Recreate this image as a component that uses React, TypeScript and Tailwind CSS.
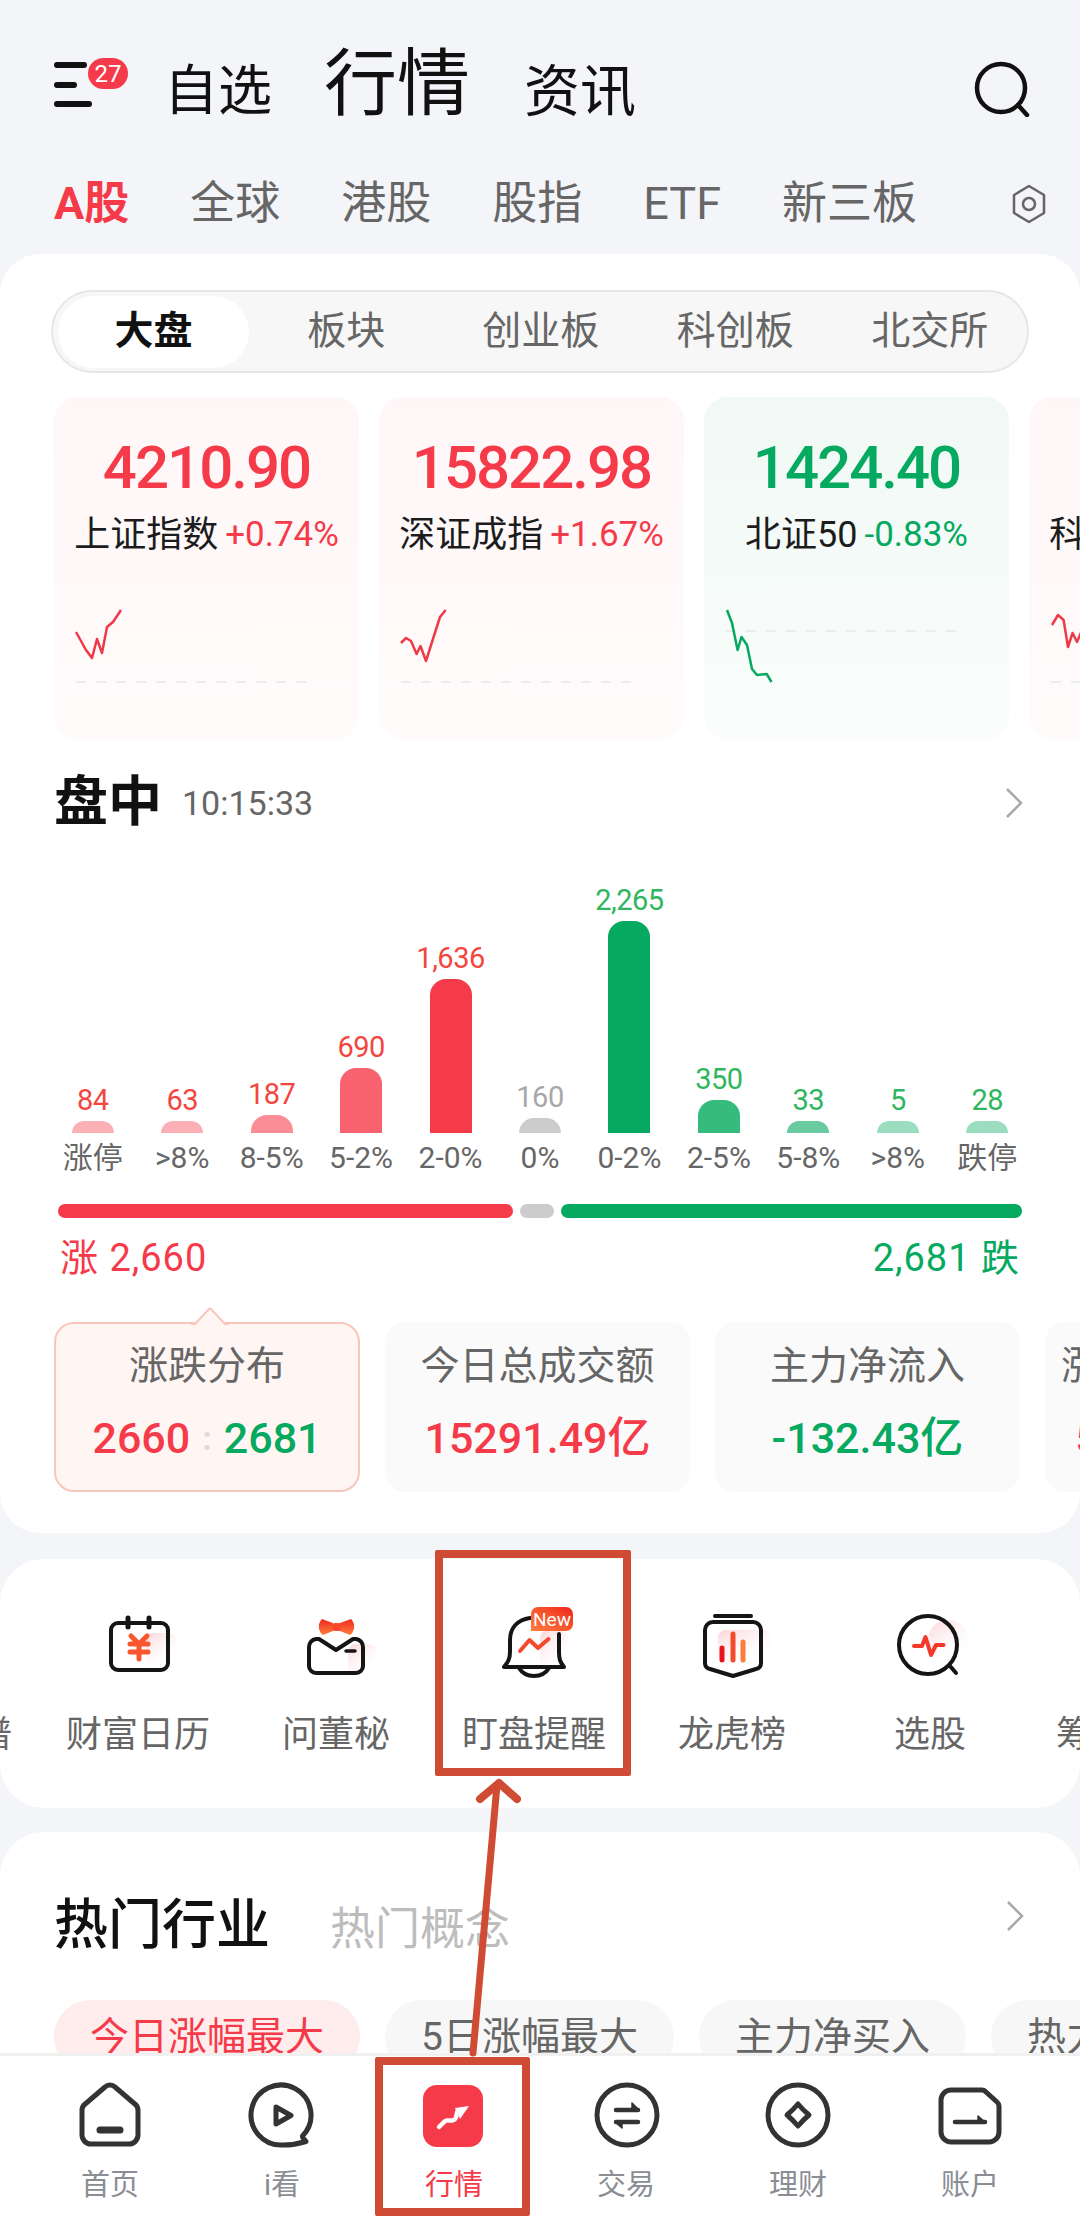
import type { ReactNode } from "react";

const RED = "#f53a49";
const GREEN = "#05a95f";

const topTabs = ["全球", "港股", "股指", "ETF", "新三板"];
const segments = ["板块", "创业板", "科创板", "北交所"];

const indexes = [
  {
    value: "4210.90",
    name: "上证指数",
    change: "+0.74%",
    up: true,
    line: "22,32 32,50 38,58 43,39 48,53 53,27 59,22 67,10",
    dashY: 82,
  },
  {
    value: "15822.98",
    name: "深证成指",
    change: "+1.67%",
    up: true,
    line: "22,43 27,38 32,41 37.6,54 41.5,46 47,61 54.6,37 61,17 66.7,10",
    dashY: 82,
  },
  {
    value: "1424.40",
    name: "北证50",
    change: "-0.83%",
    up: false,
    line: "23,10 28,23 33.6,50 37.5,37 43,45 48,69 53,75 62.7,74 67.5,82",
    dashY: 31,
  },
  {
    value: "1778.32",
    name: "科创综指",
    change: "+0.52%",
    up: true,
    line: "23,25 29,15 34.6,20 39,47 43.6,33 48,42 54,28 60,40 66,20",
    dashY: 82,
  },
];

const bars = [
  { label: "涨停", count: "84", h: 12, bar: "#fbb0b6", text: "#f4453f" },
  { label: ">8%", count: "63", h: 12, bar: "#fbb0b6", text: "#f4453f" },
  { label: "8-5%", count: "187", h: 18, bar: "#fb8d96", text: "#f4453f" },
  { label: "5-2%", count: "690", h: 65, bar: "#f9636f", text: "#f4453f" },
  { label: "2-0%", count: "1,636", h: 154, bar: RED, text: "#f4453f" },
  { label: "0%", count: "160", h: 15, bar: "#cccccc", text: "#a8a8a8" },
  { label: "0-2%", count: "2,265", h: 212, bar: GREEN, text: "#2fb65f" },
  { label: "2-5%", count: "350", h: 33, bar: "#36bb7f", text: "#2fb65f" },
  { label: "5-8%", count: "33", h: 12, bar: "#69cb9f", text: "#2fb65f" },
  { label: ">8%", count: "5", h: 12, bar: "#9bddbf", text: "#2fb65f" },
  { label: "跌停", count: "28", h: 12, bar: "#9bddbf", text: "#2fb65f" },
];

const pills = ["5日涨幅最大", "主力净买入", "热力图"];

const Gradients = () => (
  <svg className="absolute h-0 w-0">
    <defs>
      <linearGradient id="warm" x1="0" y1="0" x2="0" y2="1">
        <stop offset="0" stopColor="#ee2a1f" />
        <stop offset="1" stopColor="#ff7c3e" />
      </linearGradient>
      <linearGradient id="blush" x1="0" y1="0" x2="0.7" y2="1">
        <stop offset="0" stopColor="#fbd3d7" />
        <stop offset="1" stopColor="#ffffff" stopOpacity="0" />
      </linearGradient>
    </defs>
  </svg>
);

const ItemIcon = ({ children }: { children: ReactNode }) => (
  <svg
    viewBox="0 -10 100 82"
    className="h-[82px] w-[100px]"
    fill="none"
    stroke="#151515"
    strokeWidth={4}
    strokeLinecap="round"
    strokeLinejoin="round"
  >
    {children}
  </svg>
);

const quickLinks: { label: string; icon: ReactNode; isNew?: boolean }[] = [
  { label: "产业图谱", icon: <ItemIcon>{null}</ItemIcon> },
  {
    label: "财富日历",
    icon: (
      <ItemIcon>
        <rect x="58" y="23" width="30" height="32" rx="6" fill="url(#blush)" stroke="none" />
        <rect x="23" y="13" width="57" height="47" rx="7" />
        <path d="M40 8v9M61 8v9" strokeWidth={5} />
        <path d="M43 26l8 8 8-8M42 34h18M42 42h18M51 34v15" stroke="#f9562f" strokeWidth={5} />
      </ItemIcon>
    ),
  },
  {
    label: "问董秘",
    icon: (
      <ItemIcon>
        <rect x="62" y="34" width="28" height="32" rx="8" fill="url(#blush)" stroke="none" />
        <path d="M33 29L50 40 67 29h3a8 8 0 0 1 7 8v19a7 7 0 0 1-7 7H30a7 7 0 0 1-7-7V37a8 8 0 0 1 7-8z" />
        <path d="M60 41h9" strokeWidth={3.5} />
        <path
          d="M47 13L36 9q-4 4-3 10 1 4 4 6l10-4zM54 13l11-4q4 4 3 10-1 4-4 6l-10-4z"
          fill="url(#warm)"
          stroke="none"
        />
        <rect x="47" y="13" width="7.5" height="8" rx="1.5" fill="#f9482a" stroke="none" />
      </ItemIcon>
    ),
  },
  {
    label: "盯盘提醒",
    isNew: true,
    icon: (
      <ItemIcon>
        <rect x="56" y="20" width="28" height="38" rx="8" fill="url(#blush)" stroke="none" />
        <path d="M46 8C33 10 26 18 26 30v12c0 7-2 10-6 15h60c-4-5-5-8-5-15V24" />
        <path d="M35 58c3 5 9 8 15 8s12-3 15-8" />
        <path d="M36 41l9.500-11 8.500 8 10.500-9" stroke="#f4492d" strokeWidth={4} />
      </ItemIcon>
    ),
  },
  {
    label: "龙虎榜",
    icon: (
      <ItemIcon>
        <rect x="36" y="20" width="52" height="32" rx="8" fill="url(#blush)" stroke="none" />
        <path d="M33 6h36" />
        <path d="M31 12h40a8 8 0 0 1 8 8v33q0 5-5 6l-23 7-23-7q-5-1-5-6V20a8 8 0 0 1 8-8z" />
        <path d="M40 38v12" stroke="#e8161c" strokeWidth={5} />
        <path d="M51 24v26" stroke="#f4492d" strokeWidth={5} />
        <path d="M61 32v18" stroke="#fb7c3e" strokeWidth={5} />
      </ItemIcon>
    ),
  },
  {
    label: "选股",
    icon: (
      <ItemIcon>
        <circle cx="68" cy="30" r="20" fill="url(#blush)" stroke="none" />
        <circle cx="48" cy="35" r="29" />
        <path d="M70 56l6 7" />
        <path d="M34 36h8l3.500-9 5.500 18 5-10h7.500" stroke="#f4392a" strokeWidth={4} />
      </ItemIcon>
    ),
  },
  { label: "筹码分布", icon: <ItemIcon>{null}</ItemIcon> },
];

const TabIcon = ({ children }: { children: ReactNode }) => (
  <svg
    viewBox="0 0 72 72"
    className="h-[72px] w-[72px]"
    fill="none"
    stroke="#333333"
    strokeWidth={5}
    strokeLinecap="round"
    strokeLinejoin="round"
  >
    {children}
  </svg>
);

const bottomTabs: { label: string; active?: boolean; icon: ReactNode }[] = [
  {
    label: "首页",
    icon: (
      <TabIcon>
        <path d="M31 8a7 7 0 0 1 10 0l21 18a8 8 0 0 1 2 6v24a9 9 0 0 1-9 9H17a9 9 0 0 1-9-9V32a8 8 0 0 1 2-6z" />
        <path d="M26 51h20" strokeWidth={7} />
      </TabIcon>
    ),
  },
  {
    label: "i看",
    icon: (
      <TabIcon>
        <path d="M56.500 57A30 30 0 1 0 37 66c7 0 15-1 23-3.500-2-2.500-4-3.500-3.500-5.500z" />
        <path d="M30 28l15 8.500L30 45z" />
      </TabIcon>
    ),
  },
  {
    label: "行情",
    active: true,
    icon: (
      <TabIcon>
        <rect x="5" y="6" width="60" height="62" rx="14" fill={RED} stroke="none" />
        <path d="M21 48l5-5q1-1.500 3-1.500h5q3 0 4-3.500l1.500-6" stroke="#ffffff" strokeWidth={4.500} fill="none" />
        <path d="M37 29l14-2-9 13z" fill="#ffffff" stroke="none" />
      </TabIcon>
    ),
  },
  {
    label: "交易",
    icon: (
      <TabIcon>
        <circle cx="37" cy="36" r="30" />
        <path d="M26 31h22M26 43h22" strokeWidth={4.500} />
        <path d="M42 24l7 7h-7zM32 49l-7-6h7z" fill="#333333" strokeWidth={1.500} />
      </TabIcon>
    ),
  },
  {
    label: "理财",
    icon: (
      <TabIcon>
        <circle cx="36" cy="36" r="30" />
        <path d="M36 25q5 6 11 11-6 5-11 11-5-6-11-11 6-5 11-11z" />
      </TabIcon>
    ),
  },
  {
    label: "账户",
    icon: (
      <TabIcon>
        <path d="M17 11h31a6 6 0 0 1 4 2l11 10a6 6 0 0 1 2 4v26a10 10 0 0 1-10 10H17A10 10 0 0 1 7 53V21a10 10 0 0 1 10-10z" />
        <path d="M21 43h30" strokeWidth={4.500} />
        <path d="M44 37l7 6h-7z" fill="#333333" strokeWidth={1.500} />
      </TabIcon>
    ),
  },
];

const Chevron = () => (
  <svg viewBox="0 0 20 32" className="h-[32px] w-[20px]" fill="none" stroke="#a8a8a8" strokeWidth={2.5}>
    <path d="M3 2l14 14L3 30" />
  </svg>
);

const IndexCard = ({ item }: { item: (typeof indexes)[number] }) => {
  const color = item.up ? RED : GREEN;
  return (
    <div
      className={`flex h-[343px] w-[305px] shrink-0 flex-col items-center rounded-[24px] bg-linear-to-b pt-[41px] ${
        item.up ? "from-[#fff6f7] to-[#fffbfb]" : "from-[#f0f9f5] to-[#fafdfb]"
      }`}
    >
      <div className="text-[60px] leading-[60px] font-medium tracking-[-2px]" style={{ color }}>
        {item.value}
      </div>
      <div className="mt-[19px] flex items-center gap-[7px] text-[36px] leading-[36px] whitespace-nowrap">
        <span className="text-[#1c1c1c]">{item.name}</span>
        <span className="text-[35px]" style={{ color }}>
          {item.change}
        </span>
      </div>
      <svg viewBox="0 0 305 90" className="mt-[47px] h-[90px] w-[305px]" fill="none">
        <path d={`M22 ${item.dashY}H253`} stroke="#ececec" strokeWidth={2} strokeDasharray="10 10" />
        <polyline points={item.line} stroke={item.up ? "#ee3a48" : GREEN} strokeWidth={2.5} strokeLinejoin="round" />
      </svg>
    </div>
  );
};

const StatCard = ({ title, children }: { title: string; children: ReactNode }) => (
  <div className="flex h-[170px] w-[305px] shrink-0 flex-col items-center rounded-[20px] bg-[#fafafa] pt-[24px]">
    <div className="text-[39px] leading-[40px] whitespace-nowrap text-[#666666]">{title}</div>
    <div className="mt-[28px] text-[43px] leading-[48px] font-medium whitespace-nowrap">{children}</div>
  </div>
);

export default function App() {
  return (
    <div className="relative flex h-[2223px] w-[1080px] flex-col overflow-hidden bg-[#f4f5f9] font-[Roboto,'Noto_Sans_CJK_SC',sans-serif]">
      <Gradients />
      <div className="min-h-0 flex-1 overflow-hidden">
        {/* Header */}
        <div className="mt-[50px] flex h-[70px] items-end pl-[54px] text-[#111111]">
          <div className="relative mb-[13px] flex h-[45px] w-[74px] flex-col justify-between">
            <div className="h-[6px] w-[33px] rounded-full bg-[#111111]" />
            <div className="h-[6px] w-[23px] rounded-full bg-[#111111]" />
            <div className="h-[6px] w-[38px] rounded-full bg-[#111111]" />
            <div className="absolute top-[-4px] left-[34px] flex h-[31px] w-[40px] items-center justify-center rounded-full bg-[#f53a49] text-[24px] leading-none text-white">
              27
            </div>
          </div>
          <div className="ml-[36px] text-[54px] leading-[56px]">自选</div>
          <div className="ml-[52px] text-[73px] leading-[72px]">行情</div>
          <div className="ml-[54px] text-[56px] leading-[56px]">资讯</div>
          <svg viewBox="0 0 56 56" className="mr-[50px] mb-[3px] ml-auto h-[56px] w-[56px]" fill="none" stroke="#111111" strokeWidth={4.5} strokeLinecap="round">
            <circle cx="27" cy="27" r="24" />
            <path d="M44 44l9 10" />
          </svg>
        </div>

        {/* Market tabs */}
        <div className="mt-[62px] flex h-[44px] items-center gap-[61px] pl-[54px] text-[45px] leading-[44px] text-[#666666]">
          <div className="font-bold text-[#f53a49]">A股</div>
          {topTabs.map((tab) => (
            <div key={tab}>{tab}</div>
          ))}
          <svg viewBox="0 0 36 40" className="ml-[33px] h-[40px] w-[36px]" fill="none" stroke="#666666" strokeWidth={2.5}>
            <path d="M18 2l15 9v18l-15 9-15-9V11z" strokeLinejoin="round" />
            <circle cx="18" cy="20" r="6" />
          </svg>
        </div>

        {/* Market overview card */}
        <div className="mt-[28px] overflow-hidden rounded-[40px] bg-white pt-[36px] pb-[41px]">
          <div className="ml-[51px] flex h-[83px] w-[978px] items-center rounded-full border-2 border-[#e6e6e6] bg-[#f7f7f7] pl-[5px] text-[39px] text-[#666666]">
            <div className="flex h-[72px] w-[191px] items-center justify-center rounded-full bg-white font-bold text-[#111111]">
              大盘
            </div>
            <div className="flex flex-1">
              {segments.map((s) => (
                <div key={s} className="flex-1 text-center">
                  {s}
                </div>
              ))}
            </div>
          </div>

          <div className="mt-[24px] flex gap-[20px] pl-[54px]">
            {indexes.map((item) => (
              <IndexCard key={item.name} item={item} />
            ))}
          </div>

          <div className="mt-[36px] flex h-[54px] items-center pr-[56px] pl-[54px]">
            <div className="text-[54px] leading-[54px] font-bold text-[#111111]">盘中</div>
            <div className="ml-[20px] text-[34px] text-[#666666]">10:15:33</div>
            <div className="ml-auto">
              <Chevron />
            </div>
          </div>

          {/* Rise / fall distribution */}
          <div className="mx-[48px] grid h-[303px] w-[984px] grid-cols-11 items-end">
            {bars.map((b) => (
              <div key={b.label + b.count} className="flex flex-col items-center">
                <div className="mb-[7px] text-[29px] leading-[28px] tracking-[-0.5px]" style={{ color: b.text }}>
                  {b.count}
                </div>
                <div className="w-[42px] rounded-t-[16px]" style={{ height: b.h, backgroundColor: b.bar }} />
              </div>
            ))}
          </div>
          <div className="mx-[48px] mt-[10px] grid w-[984px] grid-cols-11 text-center text-[30px] leading-[30px] text-[#666666]">
            {bars.map((b) => (
              <div key={b.label + b.count}>{b.label}</div>
            ))}
          </div>

          <div className="mx-[58px] mt-[31px] flex h-[14px] gap-[7px]">
            <div className="w-[455px] rounded-full bg-[#f53a49]" />
            <div className="w-[34px] rounded-full bg-[#cccccc]" />
            <div className="flex-1 rounded-full bg-[#05a95f]" />
          </div>
          <div className="mx-[60px] mt-[22px] flex justify-between text-[38px] leading-[36px] tracking-[1px]">
            <div className="text-[#f53a49]">涨 2,660</div>
            <div className="text-[#05a95f]">2,681 跌</div>
          </div>

          <div className="mt-[46px] flex gap-[25px] pl-[54px]">
            <div className="relative flex h-[170px] w-[306px] shrink-0 flex-col items-center rounded-[20px] border-2 border-[#f8c6ba] bg-[#fff5f3] pt-[22px]">
              <svg viewBox="0 0 40 18" className="absolute top-[-17px] left-[134px] h-[18px] w-[40px]" fill="#fff5f3" stroke="#f8c6ba" strokeWidth={2}>
                <path d="M1 17h4L19 2q1-1 2 0l14 15h4" />
              </svg>
              <div className="text-[39px] leading-[40px] whitespace-nowrap text-[#666666]">涨跌分布</div>
              <div className="mt-[28px] flex items-center text-[43px] leading-[48px] font-medium">
                <span className="text-[#f53a49]">2660</span>
                <span className="mx-[12px] text-[34px] font-bold text-[#dcdcdc]">:</span>
                <span className="text-[#05a95f]">2681</span>
              </div>
            </div>
            <StatCard title="今日总成交额">
              <span className="text-[#f53a49]">15291.49亿</span>
            </StatCard>
            <StatCard title="主力净流入">
              <span className="text-[#05a95f]">-132.43亿</span>
            </StatCard>
            <StatCard title="涨停封板成功率">
              <span className="text-[#f53a49]">5021.36万手</span>
            </StatCard>
          </div>
        </div>

        {/* Quick links */}
        <div className="mt-[26px] flex h-[249px] overflow-hidden rounded-[44px] bg-white pt-[41px] pl-[39px]">
          <div className="ml-[-198px] flex shrink-0">
            {quickLinks.map((link) => (
              <div key={link.label} className="flex w-[198px] shrink-0 flex-col items-center">
                <div className="relative">
                  {link.icon}
                  {link.isNew && (
                    <div className="absolute top-[7px] left-[47px] flex h-[24px] w-[42px] items-center justify-center rounded-t-[7px] rounded-br-[7px] bg-linear-to-tr from-[#ff7c3e] to-[#ee1c1c] text-[19px] leading-none text-white">
                      New
                    </div>
                  )}
                </div>
                <div className="mt-[35px] text-[36px] leading-[36px] whitespace-nowrap text-[#666666]">{link.label}</div>
              </div>
            ))}
          </div>
        </div>

        {/* Hot sectors */}
        <div className="mt-[24px] rounded-t-[44px] bg-white pt-[68px] pl-[54px]">
          <div className="flex h-[52px] items-end">
            <div className="text-[54px] leading-[52px] font-medium text-[#111111]">热门行业</div>
            <div className="ml-[60px] text-[45px] leading-[44px] text-[#bdbdbd]">热门概念</div>
            <div className="mr-[55px] ml-auto self-start">
              <Chevron />
            </div>
          </div>
          <div className="mt-[48px] flex gap-[25px] overflow-hidden text-[39px]">
            <div className="flex h-[74px] w-[306px] shrink-0 items-center justify-center rounded-full bg-[#ffecec] text-[#f53a49]">
              今日涨幅最大
            </div>
            {pills.map((p) => (
              <div key={p} className="flex h-[74px] shrink-0 items-center rounded-full bg-[#f7f7f7] px-[36px] text-[#666666]">
                {p}
              </div>
            ))}
          </div>
        </div>
      </div>

      {/* Bottom navigation */}
      <div className="flex h-[170px] shrink-0 border-t-[3px] border-[#f0f0f0] bg-white px-[24px] pt-[23px]">
        {bottomTabs.map((tab) => (
          <div key={tab.label} className="flex flex-1 flex-col items-center">
            {tab.icon}
            <div className={`mt-[19px] text-[29px] leading-[30px] ${tab.active ? "text-[#f53a49]" : "text-[#8a8d94]"}`}>
              {tab.label}
            </div>
          </div>
        ))}
      </div>

      {/* Annotations */}
      <div className="absolute top-[1550px] left-[435px] h-[226px] w-[196px] rounded-[2px] border-8 border-[#d04b33]" />
      <div className="absolute top-[2057px] left-[375px] h-[159px] w-[155px] rounded-[2px] border-8 border-[#d04b33]" />
      <svg viewBox="0 0 80 290" className="absolute top-[1775px] left-[455px] h-[290px] w-[80px]" fill="none" stroke="#d04b33" strokeWidth={7} strokeLinecap="round" strokeLinejoin="round">
        <path d="M42 10L18 278" />
        <path d="M25 24L44 8 62 24" strokeWidth={8} />
      </svg>
    </div>
  );
}
